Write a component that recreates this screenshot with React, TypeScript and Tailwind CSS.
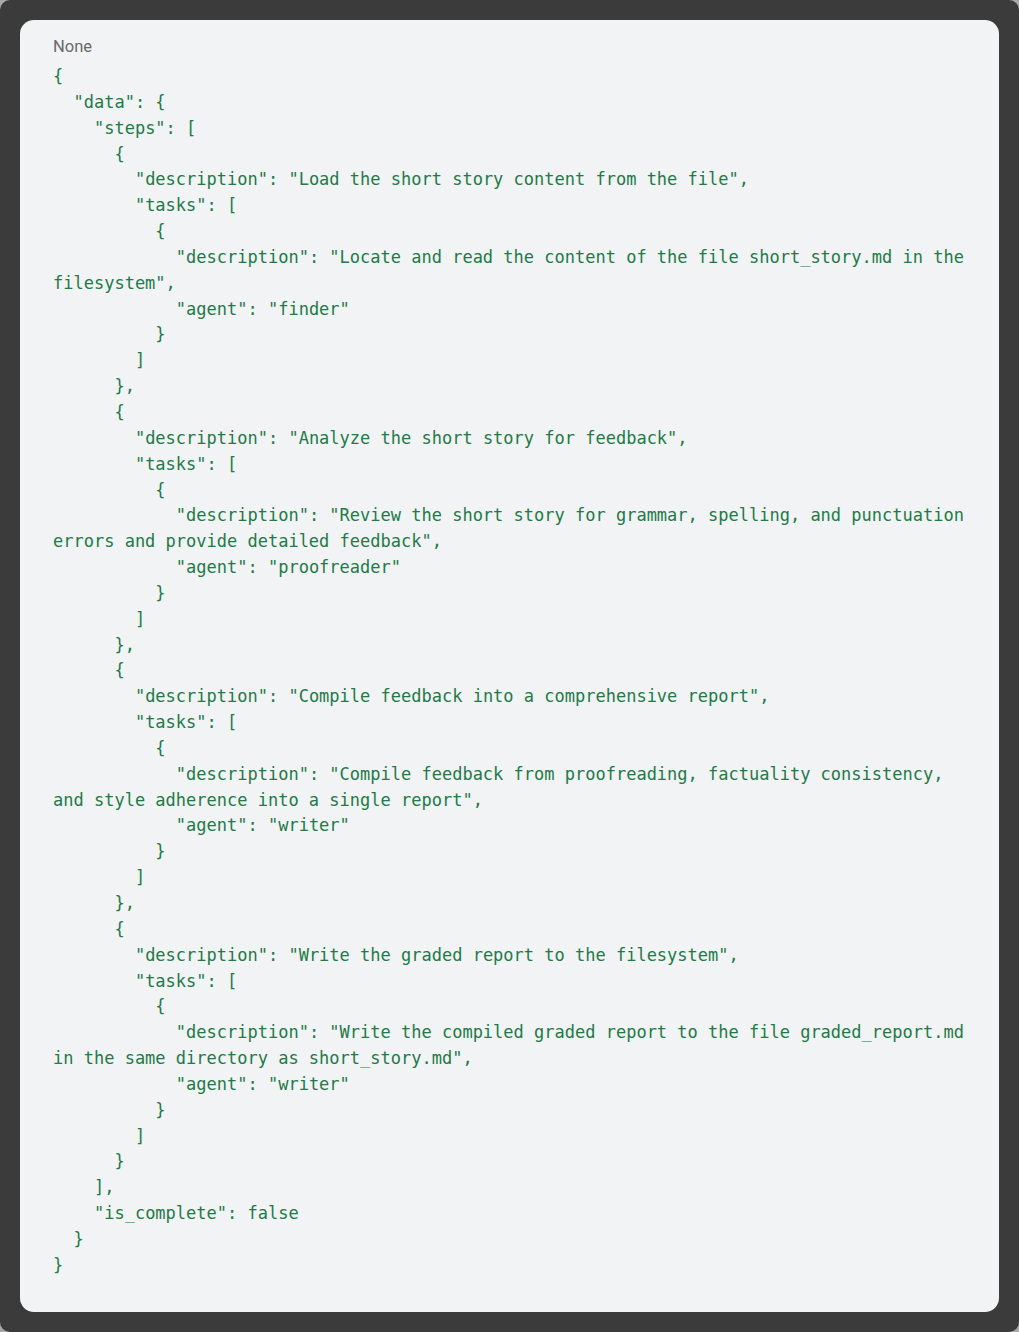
const code = `{
  "data": {
    "steps": [
      {
        "description": "Load the short story content from the file",
        "tasks": [
          {
            "description": "Locate and read the content of the file short_story.md in the filesystem",
            "agent": "finder"
          }
        ]
      },
      {
        "description": "Analyze the short story for feedback",
        "tasks": [
          {
            "description": "Review the short story for grammar, spelling, and punctuation errors and provide detailed feedback",
            "agent": "proofreader"
          }
        ]
      },
      {
        "description": "Compile feedback into a comprehensive report",
        "tasks": [
          {
            "description": "Compile feedback from proofreading, factuality consistency, and style adherence into a single report",
            "agent": "writer"
          }
        ]
      },
      {
        "description": "Write the graded report to the filesystem",
        "tasks": [
          {
            "description": "Write the compiled graded report to the file graded_report.md in the same directory as short_story.md",
            "agent": "writer"
          }
        ]
      }
    ],
    "is_complete": false
  }
}`

export default function App() {
  return (
    <div className="w-[1019px] h-[1332px] bg-[#a8a8a8]">
      <div className="flex h-full flex-col rounded-[10px] bg-[#3b3b3b] p-5">
        <div className="flex-1 rounded-[14px] bg-[#f1f3f4] px-[33px] pt-[15px]">
          <div className="text-[16.5px] leading-6 text-[#666a6e] font-['Roboto','Liberation_Sans',sans-serif]">
            None
          </div>
          <pre className="mt-[5px] whitespace-pre-wrap break-normal text-[17px] leading-[25.85px] text-[#237a47] font-['DejaVu_Sans_Mono','Liberation_Mono',monospace]">
            {code}
          </pre>
        </div>
      </div>
    </div>
  )
}
